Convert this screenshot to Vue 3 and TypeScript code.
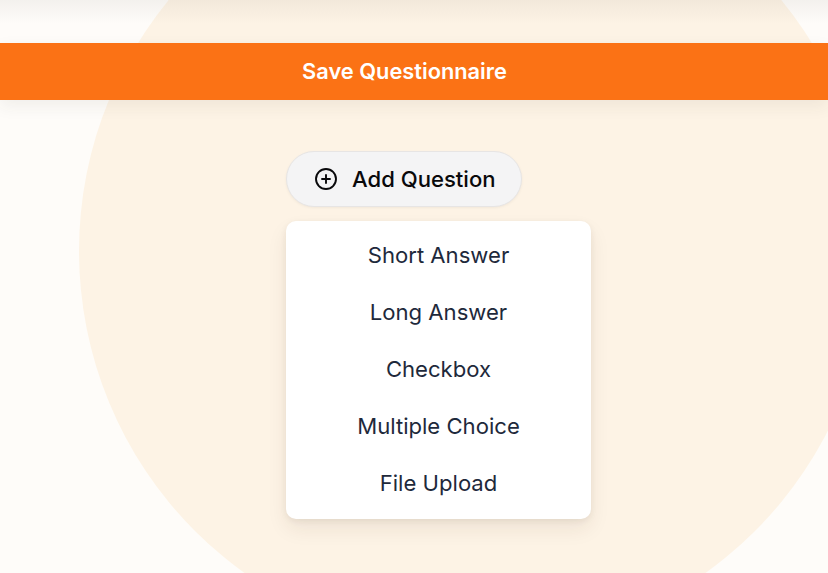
<script setup lang="ts">
const options: string[] = ['Short Answer', 'Long Answer', 'Checkbox', 'Multiple Choice', 'File Upload']
</script>

<template>
  <div class="page">
    <div class="circle"></div>
    <div class="top-shade"></div>
    <button class="save" type="button"><span class="save-label">Save Questionnaire</span></button>
    <div class="content">
      <button class="add" type="button">
        <svg class="plus" viewBox="0 0 24 24" fill="none" stroke="currentColor" stroke-width="1.9" stroke-linecap="round" stroke-linejoin="round">
          <circle cx="12" cy="12" r="10" />
          <path d="M8 12h8M12 8v8" />
        </svg>
        <span>Add Question</span>
      </button>
      <ul class="menu">
        <li v-for="option in options" :key="option" class="item">{{ option }}</li>
      </ul>
    </div>
  </div>
</template>

<style scoped>
.page {
  position: relative;
  width: 828px;
  height: 573px;
  overflow: hidden;
  background: #fefcf9;
  font-family: Inter, "Liberation Sans", sans-serif;
  padding-top: 43px;
  box-sizing: border-box;
}
.circle {
  position: absolute;
  left: 79px;
  top: -145px;
  width: 792px;
  height: 792px;
  border-radius: 50%;
  background: #fdf3e5;
}
.top-shade {
  position: absolute;
  left: 0;
  top: 0;
  width: 100%;
  height: 24px;
  background: linear-gradient(to bottom, rgba(60, 50, 40, 0.055), rgba(60, 50, 40, 0));
}
.save {
  position: relative;
  display: block;
  width: 100%;
  height: 57px;
  border: 0;
  padding: 0 19px 2px 0;
  background: #fb7215;
  color: #fff;
  font: inherit;
  font-size: 21.8px;
  font-weight: 600;
  box-shadow: 0 6px 16px rgba(60, 50, 40, 0.07);
}
.content {
  position: relative;
  margin-top: 51px;
  margin-left: 286px;
  width: 305px;
}
.add {
  display: flex;
  align-items: center;
  gap: 14px;
  box-sizing: border-box;
  width: 236px;
  height: 56px;
  padding: 0 0 0 27px;
  border: 1px solid #e7e5e4;
  border-radius: 28px;
  background: #f4f4f5;
  color: #09090b;
  font: inherit;
  font-size: 22.1px;
  font-weight: 500;
  box-shadow: 0 1px 3px rgba(0, 0, 0, 0.05);
}
.plus {
  width: 24px;
  height: 24px;
  flex: none;
}
.menu {
  list-style: none;
  margin: 14px 0 0;
  padding: 5px 0 7px;
  background: #fff;
  border-radius: 10px;
  box-shadow: 0 10px 20px rgba(60, 40, 20, 0.08), 0 2px 6px rgba(60, 40, 20, 0.07);
}
.item {
  height: 57.2px;
  display: flex;
  align-items: center;
  justify-content: center;
  color: #1e293b;
  font-size: 22.1px;
  font-weight: 400;
}
</style>
